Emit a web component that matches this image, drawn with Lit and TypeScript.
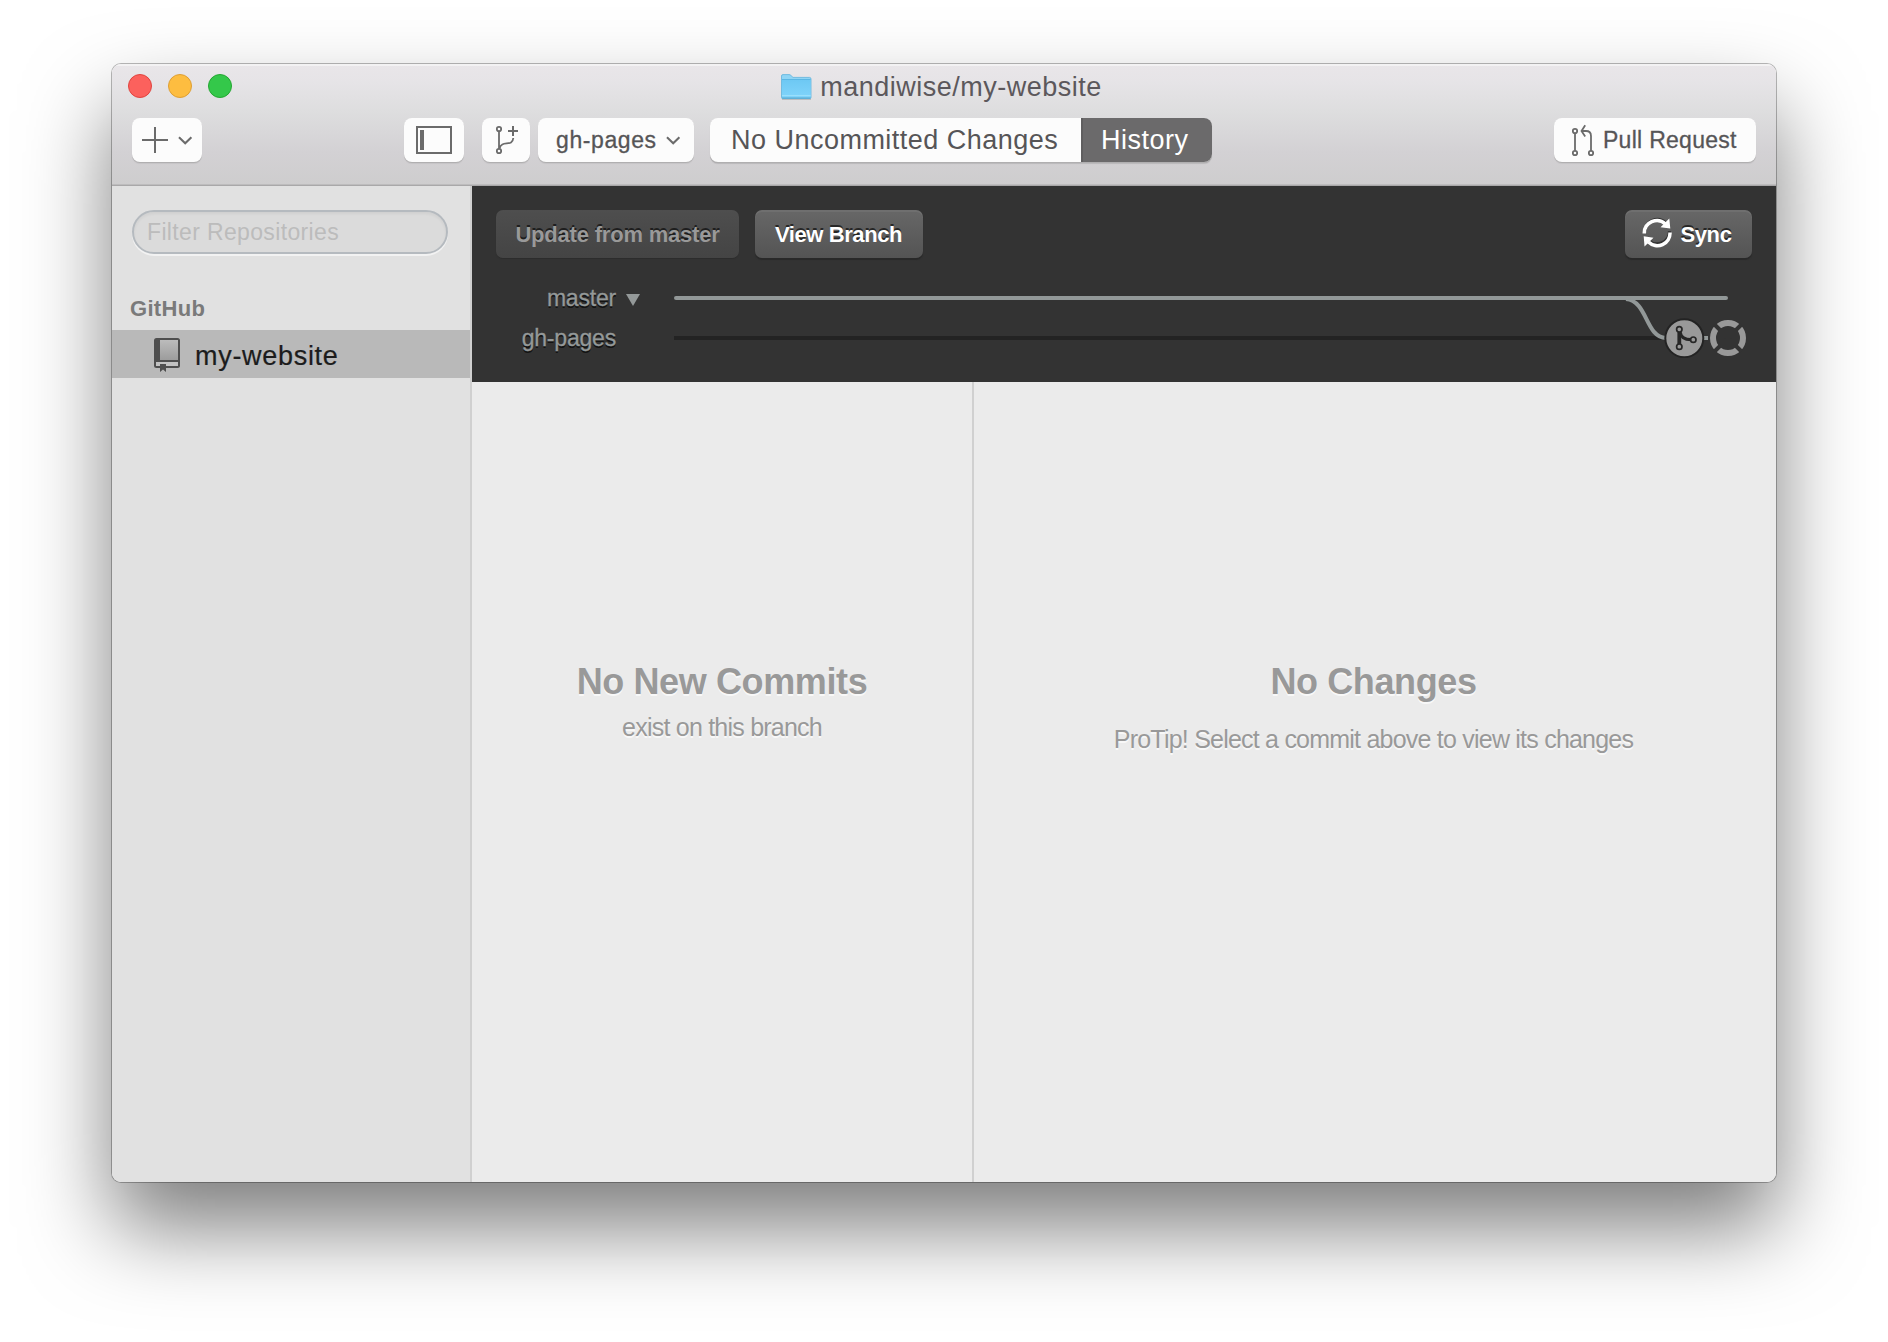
import { LitElement, html, css, svg } from "lit";
import { customElement } from "lit/decorators.js";

const chevron = svg`<path d="M1 1.2 L7.2 7.3 L13.4 1.2" fill="none" stroke="#6b6b6b" stroke-width="2.1"/>`;

@customElement("window-header")
class WindowHeader extends LitElement {
  static styles = css`
    :host {
      display: flex;
      flex-direction: column;
      box-sizing: border-box;
      height: 122px;
      background: linear-gradient(#e9e6e9 0, #e6e4e7 18px, #dededf 46px, #d3d1d4 88px, #cecdce 120px);
      border-bottom: 1px solid #a9a8a9;
      box-shadow: inset 0 2px 0 #f3f2f3, inset 0 -1px 0 #bdbcbd;
      color: #565557;
    }
    .titlebar {
      display: grid;
      grid-template-columns: 1fr auto 1fr;
      height: 46px;
      padding: 0 16px;
    }
    .lights {
      display: flex;
      align-items: center;
      gap: 16px;
      padding-bottom: 2px;
    }
    .light {
      box-sizing: border-box;
      width: 24px;
      height: 24px;
      border-radius: 50%;
      border: 1px solid;
    }
    .red { background: #fc615d; border-color: #e0443f; }
    .yellow { background: #fdbd40; border-color: #de9f34; }
    .green { background: #34c84a; border-color: #24a732; }
    .title {
      display: flex;
      align-items: center;
      gap: 8px;
      font-size: 27px;
      letter-spacing: 0.5px;
      line-height: 46px;
      color: #5c585c;
      margin-right: 5px;
    }
    .title svg { margin-bottom: 1px; }
    .tools {
      display: flex;
      padding: 8px 20px 0;
    }
    .btn {
      display: flex;
      align-items: center;
      box-sizing: border-box;
      height: 44px;
      border-radius: 8px;
      background: #fcfcfc;
      box-shadow: 0 1px 0 #b0afb0, 0 2px 1px rgba(0, 0, 0, 0.06);
      white-space: nowrap;
    }
    .btn svg { display: block; flex: none; }
    .add { width: 70px; padding-left: 10px; gap: 10px; margin-right: 202px; }
    .toggle { width: 60px; justify-content: center; margin-right: 18px; }
    .branch { width: 48px; justify-content: center; margin-right: 8px; }
    .current {
      width: 156px;
      padding: 0 13px 0 18px;
      justify-content: space-between;
      font-size: 23px;
      letter-spacing: 0.6px;
      -webkit-text-stroke: 0.3px currentColor;
      margin-right: 16px;
    }
    .segments { width: 502px; font-size: 27px; overflow: hidden; }
    .clip { border-radius: 8px; box-shadow: 0 1px 0 #b0afb0, 0 2px 1px rgba(0, 0, 0, 0.06); }
    .seg { line-height: 45px; box-sizing: border-box; height: 44px; }
    .seg-a { width: 371px; padding-left: 21px; letter-spacing: 0.48px; }
    .seg-b {
      width: 131px;
      padding-left: 18px;
      letter-spacing: 0.5px;
      background: #6b6a6b;
      border-left: 2px solid #5f5e5f;
      color: #fff;
    }
    .pull {
      width: 202px;
      margin-left: auto;
      padding-left: 17px;
      gap: 7px;
      font-size: 23px;
      letter-spacing: 0.28px;
      -webkit-text-stroke: 0.3px currentColor;
    }
  `;
  render() {
    return html`
      <div class="titlebar">
        <div class="lights">
          <span class="light red"></span><span class="light yellow"></span><span class="light green"></span>
        </div>
        <div class="title">
          <svg width="31" height="26" viewBox="0 0 31 26">
            <defs>
              <linearGradient id="f" x1="0" y1="0" x2="0" y2="1">
                <stop offset="0" stop-color="#6dc8f3"/><stop offset="1" stop-color="#80d4fb"/>
              </linearGradient>
            </defs>
            <path d="M1 25.3H30" stroke="#000" stroke-opacity=".2" stroke-width="1"/>
            <path d="M.5 23.5V2Q.5.6 2 .6H8Q9.200.6 10 1.500L12 3.400H28.500Q30 3.400 30 5V23.500Q30 24.500 29 24.500H1.500Q.5 24.500 .5 23.500Z" fill="#8fd5f5" stroke="#5fb2dc" stroke-width=".8"/>
            <path d="M1 5.500H29.600V23.600H1Z" fill="url(#f)"/>
            <path d="M1 5.500H29.600" stroke="#5cb7e4" stroke-width="1"/>
            <path d="M1 21.500H29.600" stroke="#9adffc" stroke-width="1"/>
            <path d="M1 24H29.600" stroke="#4fa5cf" stroke-width="1"/>
          </svg>
          <span>mandiwise/my-website</span>
        </div>
        <span></span>
      </div>
      <div class="tools">
        <div class="btn add">
          <svg width="26" height="26" viewBox="0 0 26 26"><path d="M0 13H26M13 0V26" stroke="#6b6b6b" stroke-width="2"/></svg>
          <svg width="15" height="9" viewBox="0 0 15 9">${chevron}</svg>
        </div>
        <div class="btn toggle">
          <svg width="36" height="28" viewBox="0 0 36 28">
            <rect x="1" y="1" width="34" height="26" fill="none" stroke="#6b6b6b" stroke-width="2"/>
            <rect x="4" y="4" width="4" height="20" fill="#6b6b6b"/>
          </svg>
        </div>
        <div class="btn branch">
          <svg width="24" height="30" viewBox="494 125 24 30" fill="none" stroke="#6b6b6b" stroke-width="1.8">
            <circle cx="499" cy="129" r="2.200"/><circle cx="499" cy="151" r="2.200"/>
            <path d="M499 131.200V148.800M499.500 148.500C501.500 139.500 512.500 147.500 513.300 138"/>
            <path d="M508 131H518M513 126V136" stroke-width="2"/>
          </svg>
        </div>
        <div class="btn current">
          <span>gh-pages</span>
          <svg width="15" height="9" viewBox="0 0 15 9">${chevron}</svg>
        </div>
        <div class="clip">
          <div class="btn segments">
            <div class="seg seg-a">No Uncommitted Changes</div>
            <div class="seg seg-b">History</div>
          </div>
        </div>
        <div class="btn pull">
          <svg width="25" height="34" viewBox="1571 123 25 34" fill="none" stroke="#6b6b6b" stroke-width="1.800">
            <circle cx="1575" cy="131" r="2.200"/><circle cx="1575" cy="153" r="2.200"/><circle cx="1591" cy="153" r="2.200"/>
            <path d="M1575 133.200V150.800M1591 150.800V136Q1591 131 1586 131H1582"/>
            <path d="M1585.200 125.200L1581.500 131L1585.200 136.500"/>
          </svg>
          <span>Pull Request</span>
        </div>
      </div>
    `;
  }
}

@customElement("repo-sidebar")
class RepoSidebar extends LitElement {
  static styles = css`
    :host {
      display: block;
      box-sizing: border-box;
      background: #e1e1e1;
      border-right: 2px solid #d0d0d0;
      padding-top: 24px;
    }
    .filter {
      box-sizing: border-box;
      margin: 0 22px 0 20px;
      height: 44px;
      border: 2px solid #b5babf;
      border-radius: 22px;
      background: #dbdbdb;
      box-shadow: inset 0 2px 3px rgba(0, 0, 0, 0.05), 0 2px 0 #f2f2f2;
      padding-left: 13px;
      font-size: 23px;
      letter-spacing: 0.35px;
      line-height: 40px;
      color: #bcbcbc;
    }
    .group {
      padding: 40px 0 0 18px;
      height: 36px;
      font-size: 22px;
      font-weight: bold;
      letter-spacing: 0.3px;
      line-height: 30px;
      color: #7a7a7a;
    }
    .repo {
      display: flex;
      align-items: center;
      gap: 15px;
      height: 48px;
      padding-left: 42px;
      background: #b9b9b9;
      font-size: 27px;
      letter-spacing: 0.7px;
      color: #1c1c1c;
    }
    .repo svg { display: block; margin-top: 2px; }
    .repo span { padding-top: 4px; -webkit-text-stroke: 0.2px currentColor; }
  `;
  render() {
    return html`
      <div class="filter">Filter Repositories</div>
      <div class="group">GitHub</div>
      <div class="repo">
        <svg width="26" height="34" viewBox="0 0 26 34">
          <defs>
            <linearGradient id="b" x1="0" y1="0" x2="0" y2="1">
              <stop offset="0" stop-color="#bcbcbc"/><stop offset="1" stop-color="#9c9c9c"/>
            </linearGradient>
          </defs>
          <rect width="26" height="30" rx="2.500" fill="#4e4e4e"/>
          <rect x="6" y="2" width="18" height="20" fill="url(#b)"/>
          <rect x="2" y="24" width="22" height="4" fill="#c2c2c2"/>
          <path d="M6 26H12V34L9 31.500L6 34Z" fill="#4e4e4e"/>
        </svg>
        <span>my-website</span>
      </div>
    `;
  }
}

@customElement("branch-panel")
class BranchPanel extends LitElement {
  static styles = css`
    :host {
      display: block;
      box-sizing: border-box;
      height: 196px;
      padding: 24px 24px 0;
      background: #333;
    }
    .row { display: flex; justify-content: space-between; }
    .left { display: flex; gap: 16px; }
    .btn {
      display: flex;
      align-items: center;
      justify-content: center;
      box-sizing: border-box;
      height: 48px;
      border-radius: 7px;
      background: linear-gradient(#676767, #545454);
      box-shadow: inset 0 2px 0 rgba(255, 255, 255, 0.06), 0 2px 1px #292929;
      font-size: 22px;
      font-weight: bold;
      color: #fff;
      text-shadow: 0 -2px 0 rgba(0, 0, 0, 0.6);
      letter-spacing: -0.4px;
      white-space: nowrap;
    }
    .btn span { padding-top: 2px; }
    .update { width: 243px; background: linear-gradient(#4e4e4e, #444); color: #999; letter-spacing: -0.2px; box-shadow: 0 1px 1px #2c2c2c; }
    .view { width: 168px; padding-right: 1px; }
    .sync { width: 127px; gap: 9px; padding-right: 4px; }
    .sync svg { margin-top: -4px; }
    .graph { display: flex; margin-top: 20px; height: 80px; }
    .names {
      width: 120px;
      font-size: 23px;
      line-height: 40px;
      letter-spacing: -0.2px;
      text-align: right;
      color: #949999;
      text-shadow: 0 2px 0 rgba(0, 0, 0, 0.65);
      -webkit-text-stroke: 0.3px currentColor;
    }
    .arrow { display: block; margin: 16px 34px 0 10px; }
    .lines { display: block; }
  `;
  render() {
    return html`
      <div class="row">
        <div class="left">
          <div class="btn update"><span>Update from master</span></div>
          <div class="btn view"><span>View Branch</span></div>
        </div>
        <div class="btn sync">
          <svg width="30" height="32" viewBox="1642 215 30 32">
            <path d="M1645 230.500A12.300 12.300 0 0 1 1665.500 221.500M1669.400 230A12.300 12.300 0 0 1 1648.500 239.200" fill="none" stroke="#333" stroke-width="3"/>
            <path d="M1644.300 232.500A12.600 12.600 0 0 1 1665.500 223M1670 231.500A12.600 12.600 0 0 1 1648.500 241" fill="none" stroke="#fff" stroke-width="3.500"/>
            <path d="M1669.300 217.500L1670.300 227.500L1660.500 226.300ZM1643.700 235.300L1653.500 236.800L1644.500 245.600Z" fill="#fff"/>
          </svg>
          <span>Sync</span>
        </div>
      </div>
      <div class="graph">
        <div class="names"><div>master</div><div>gh-pages</div></div>
        <svg class="arrow" width="14" height="12" viewBox="0 0 14 12"><path d="M0 0H14L7 12Z" fill="#949999"/></svg>
        <svg class="lines" width="1078" height="80" viewBox="0 0 1078 80" fill="none">
          <path d="M0 60H990" stroke="#232323" stroke-width="4"/>
          <path d="M2 20H1052" stroke="#929898" stroke-width="4" stroke-linecap="round"/>
          <path d="M952 21C974 23 971 59 992 60" stroke="#929898" stroke-width="4"/>
          <path d="M1029 60H1034" stroke="#929898" stroke-width="4"/>
          <circle cx="1010.300" cy="60.200" r="19" fill="#999" stroke="#232323" stroke-width="2"/>
          <g stroke="#262626">
            <path d="M1005.300 53V67" stroke-width="3.800"/>
            <path d="M1006 54C1007 60 1011 61.700 1017 61.700" stroke-width="3.200"/>
            <g fill="#999" stroke-width="1.700">
              <circle cx="1005.300" cy="51.300" r="2.700"/><circle cx="1005.300" cy="68.700" r="2.700"/><circle cx="1019.300" cy="61.700" r="2.700"/>
            </g>
          </g>
          <circle cx="1054" cy="60" r="15" stroke="#999" stroke-width="6"/>
          <path d="M1040.500 46.500L1067.500 73.500M1067.500 46.500L1040.500 73.500" stroke="#333" stroke-width="4"/>
        </svg>
      </div>
    `;
  }
}

@customElement("app-root")
class AppRoot extends LitElement {
  static styles = css`
    :host {
      display: block;
      box-sizing: border-box;
      height: 1342px;
      padding: 64px 112px 0;
      background: #fff;
      overflow: hidden;
      font-family: "Liberation Sans", Arial, sans-serif;
    }
    .frame {
      border-radius: 9px;
      box-shadow: 0 0 0 1px rgba(0, 0, 0, 0.27), 0 46px 86px rgba(0, 0, 0, 0.51);
    }
    .window {
      display: flex;
      flex-direction: column;
      height: 1118px;
      border-radius: 9px;
      overflow: hidden;
    }
    .body { display: flex; flex: 1; }
    .side { width: 360px; flex: none; }
    .main { display: flex; flex-direction: column; flex: 1; }
    .panes { display: flex; flex: 1; background: #ebebeb; }
    .pane {
      box-sizing: border-box;
      padding-top: 280px;
      text-align: center;
      color: #999;
      text-shadow: 0 2px 0 #f8f8f8;
      white-space: nowrap;
    }
    .commits { width: 502px; border-right: 2px solid #d0d0d0; }
    .changes { flex: 1; padding-right: 3px; }
    .big { font-size: 36px; font-weight: bold; line-height: 40px; letter-spacing: -0.38px; }
    .small { font-size: 25px; line-height: 28px; letter-spacing: -0.78px; margin-top: 11px; }
    .low { margin-top: 23px; }
  `;
  render() {
    return html`
      <div class="frame">
        <div class="window">
          <window-header></window-header>
          <div class="body">
            <repo-sidebar class="side"></repo-sidebar>
            <div class="main">
              <branch-panel></branch-panel>
              <div class="panes">
                <div class="pane commits">
                  <div class="big">No New Commits</div>
                  <div class="small">exist on this branch</div>
                </div>
                <div class="pane changes">
                  <div class="big">No Changes</div>
                  <div class="small low">ProTip! Select a commit above to view its changes</div>
                </div>
              </div>
            </div>
          </div>
        </div>
      </div>
    `;
  }
}
